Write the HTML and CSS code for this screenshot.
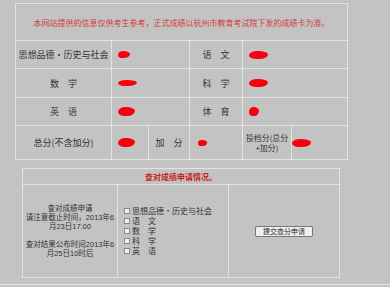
FILE: index.html
```html
<!DOCTYPE html>
<html lang="zh-CN">
<head>
  <meta charset="UTF-8">
  <meta name="viewport" content="width=device-width, initial-scale=1.0">
  <title>成绩查询</title>
  <link rel="stylesheet" href="styles.css">
</head>
<body>
  <div class="page">
    <!-- 成绩表 -->
    <div class="score-table">
      <div class="cell notice">本网站提供的信息仅供考生参考，正式成绩以杭州市教育考试院下发的成绩卡为准。</div>

      <div class="cell label">思想品德・历史与社会</div>
      <div class="cell value span2"><span class="blob blob-xs"></span></div>
      <div class="cell label">语　文</div>
      <div class="cell value span2"><span class="blob blob-l"></span></div>

      <div class="cell label">数　学</div>
      <div class="cell value span2"><span class="blob blob-flat"></span></div>
      <div class="cell label">科　学</div>
      <div class="cell value span2"><span class="blob blob-l"></span></div>

      <div class="cell label">英　语</div>
      <div class="cell value span2"><span class="blob blob-m"></span></div>
      <div class="cell label">体　育</div>
      <div class="cell value span2"><span class="blob blob-s"></span></div>

      <div class="cell label">总分(不含加分)</div>
      <div class="cell value"><span class="blob blob-m"></span></div>
      <div class="cell label">加　分</div>
      <div class="cell value value-wide"><span class="blob blob-tiny"></span></div>
      <div class="cell label label-small">投档分(总分<br>+加分)</div>
      <div class="cell value value-tight"><span class="blob blob-l"></span></div>
    </div>

    <!-- 查分申请 -->
    <div class="apply-table">
      <div class="cell apply-title">查对成绩申请情况。</div>
      <div class="cell apply-info">
        <p>查对成绩申请</p>
        <p>请注意截止时间，2013年6</p>
        <p>月23日17:00</p>
        <p class="gap">查对结果公布时间2013年6</p>
        <p>月25日10时后</p>
      </div>
      <div class="cell apply-subjects">
        <label><input type="checkbox">思想品德・历史与社会</label>
        <label><input type="checkbox">语　文</label>
        <label><input type="checkbox">数　学</label>
        <label><input type="checkbox">科　学</label>
        <label><input type="checkbox">英　语</label>
      </div>
      <div class="cell apply-action"><button>提交查分申请</button></div>
    </div>

    <div class="footer-line"></div>
  </div>
</body>
</html>
```

FILE: styles.css
```css
body {
  margin: 0;
  background-color: #c3c3c3;
  font-family: "Noto Sans CJK SC", "DejaVu Sans", sans-serif;
  color: #333333;
}

.page {
  padding-top: 3px;
  height: 284px;
}

/* tablas hechas con grid: el hueco de 1px es la línea */
.score-table,
.apply-table {
  display: grid;
  gap: 1px;
  background-color: #e3e3e3;
  border: 1px solid #e3e3e3;
  width: max-content;
}

.score-table {
  margin-left: 15px;
  grid-template-columns: 95px 36px 40px 52px 48px 55px;
  grid-template-rows: 36px 27px 28px 27px 33px;
}

.cell {
  background-color: #c3c3c3;
  display: flex;
  align-items: center;
}

.notice {
  grid-column: 1 / -1;
  justify-content: center;
  font-size: 8px;
  color: #d43a3a;
}

.label {
  justify-content: center;
  text-align: center;
  font-size: 9px;
  line-height: 9px;
  white-space: nowrap;
}

.label-small {
  font-size: 8px;
  line-height: 10px;
}

.value {
  padding-left: 6px;
}

.span2 {
  grid-column: span 2;
}

.value-wide {
  padding-left: 8px;
}

.value-tight {
  padding-left: 0;
}

/* manchas rojas que tapan la nota */
.blob {
  display: inline-block;
  background-color: #f80010;
  border-radius: 45% 55% 50% 40% / 55% 45% 60% 50%;
}

.blob-xs { width: 12px; height: 7px; }
.blob-flat { width: 19px; height: 6px; }
.blob-m { width: 17px; height: 9px; }
.blob-l { width: 19px; height: 8px; }
.blob-s { width: 10px; height: 9px; }
.blob-tiny { width: 9px; height: 6px; }

.apply-table {
  margin-top: 8px;
  margin-left: 22px;
  grid-template-columns: 94px 110px 110px;
  grid-template-rows: 15px 92px;
}

.apply-title {
  grid-column: 1 / -1;
  justify-content: center;
  font-size: 8px;
  font-weight: bold;
  color: #c81e1e;
}

.apply-info {
  flex-direction: column;
  justify-content: center;
  text-align: center;
  font-family: "Liberation Sans", "Noto Sans CJK SC", sans-serif;
  font-size: 7.5px;
  white-space: nowrap;
}

.apply-info p {
  margin: 0;
  height: 9px;
  line-height: 9px;
}

.apply-info .gap {
  margin-top: 9px;
}

.apply-subjects {
  flex-direction: column;
  align-items: flex-start;
  justify-content: center;
  padding-left: 6px;
  font-size: 8px;
  line-height: 10px;
}

.apply-subjects label {
  display: flex;
  align-items: center;
}

.apply-subjects input {
  appearance: none;
  width: 6px;
  height: 6px;
  margin: 0 2px 0 0;
  border: 1px solid #8a8a8a;
  background-color: #f2f2f2;
}

.apply-action {
  justify-content: center;
}

.apply-action button {
  width: 58px;
  height: 11px;
  padding: 0;
  font-family: inherit;
  font-size: 7px;
  line-height: 9px;
  color: #222222;
  background-color: #efefef;
  border: 1px solid #777777;
  border-radius: 2px;
}

.footer-line {
  margin-top: 6px;
  border-top: 1px solid #e6e6e6;
}
```
